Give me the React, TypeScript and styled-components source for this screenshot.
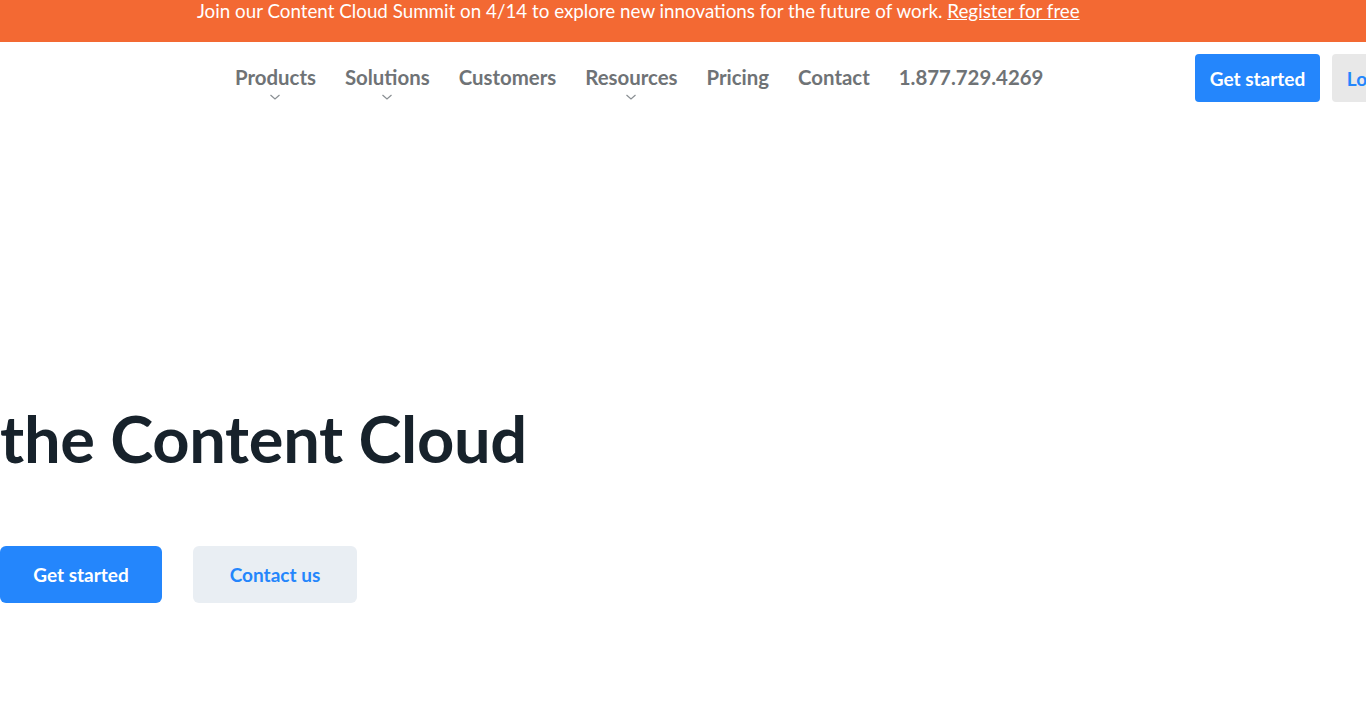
import React, { FC } from 'react';
import styled, { createGlobalStyle } from 'styled-components';

const GlobalStyle = createGlobalStyle`
  html, body {
    margin: 0;
    padding: 0;
    background: #fff;
    overflow: hidden;
  }
  body {
    font-family: Lato, "Open Sans", sans-serif;
  }
`;

const Page = styled.div`
  width: 1366px;
  height: 728px;
  overflow: hidden;
  display: flex;
  flex-direction: column;
`;

const Banner = styled.div`
  height: 42px;
  background: #f36933;
  color: #fff;
  font-size: 18.8px;
  line-height: 21px;
  padding-left: 197px;
  box-sizing: border-box;
  white-space: nowrap;
`;

const BannerLink = styled.a`
  color: #fff;
  text-decoration: underline;
`;

const Header = styled.header`
  display: flex;
  align-items: flex-start;
  height: 80px;
  padding-top: 12px;
  box-sizing: border-box;
`;

const Nav = styled.nav`
  display: flex;
  gap: 29px;
  margin-left: 235px;
  padding-top: 11px;
`;

const NavItem = styled.div`
  display: flex;
  flex-direction: column;
  align-items: center;
  color: #6f7376;
  font-size: 20.4px;
  font-weight: 700;
  line-height: 24px;
  white-space: nowrap;
`;

const Chevron = styled.svg`
  width: 12px;
  height: 8px;
  margin-top: 4px;
`;

const HeaderActions = styled.div`
  display: flex;
  gap: 12px;
  margin-left: auto;
  margin-right: -46px;
`;

const HeaderButton = styled.button<{ $secondary?: boolean }>`
  height: 48px;
  width: ${p => (p.$secondary ? '80px' : '125px')};
  padding: 0;
  border: none;
  border-radius: 4px;
  font-family: inherit;
  font-size: 19px;
  font-weight: 700;
  background: ${p => (p.$secondary ? '#e8e8e8' : '#2486fc')};
  color: ${p => (p.$secondary ? '#2486fc' : '#fff')};
  white-space: nowrap;
`;

const Hero = styled.section`
  display: flex;
  flex-direction: column;
  padding-top: 278px;
`;

const Title = styled.h1`
  margin: 0;
  font-size: 65px;
  font-weight: 700;
  line-height: 76px;
  color: #17222b;
  letter-spacing: -0.3px;
  white-space: nowrap;
`;

const CtaRow = styled.div`
  display: flex;
  gap: 31px;
  margin-top: 70px;
`;

const CtaButton = styled.button<{ $secondary?: boolean }>`
  height: 57px;
  border: none;
  border-radius: 6px;
  font-family: inherit;
  font-size: 19px;
  font-weight: 700;
  width: ${p => (p.$secondary ? '164px' : '162px')};
  background: ${p => (p.$secondary ? '#e9eef3' : '#2486fc')};
  color: ${p => (p.$secondary ? '#2486fc' : '#fff')};
`;

const navItems: { label: string; dropdown?: boolean }[] = [
  { label: 'Products', dropdown: true },
  { label: 'Solutions', dropdown: true },
  { label: 'Customers' },
  { label: 'Resources', dropdown: true },
  { label: 'Pricing' },
  { label: 'Contact' },
  { label: '1.877.729.4269' },
];

const App: FC = () => {
  return (
    <Page>
      <GlobalStyle />
      <Banner>
        Join our Content Cloud Summit on 4/14 to explore new innovations for the future of work.{' '}
        <BannerLink href="#">Register for free</BannerLink>
      </Banner>
      <Header>
        <Nav>
          {navItems.map(item => (
            <NavItem key={item.label}>
              {item.label}
              {item.dropdown && (
                <Chevron viewBox="0 0 12 8">
                  <path d="M1.5 2 L6 6 L10.5 2" fill="none" stroke="#8a8f93" strokeWidth="1.2" />
                </Chevron>
              )}
            </NavItem>
          ))}
        </Nav>
        <HeaderActions>
          <HeaderButton>Get started</HeaderButton>
          <HeaderButton $secondary>Log in</HeaderButton>
        </HeaderActions>
      </Header>
      <Hero>
        <Title>the Content Cloud</Title>
        <CtaRow>
          <CtaButton>Get started</CtaButton>
          <CtaButton $secondary>Contact us</CtaButton>
        </CtaRow>
      </Hero>
    </Page>
  );
};

export default App;
